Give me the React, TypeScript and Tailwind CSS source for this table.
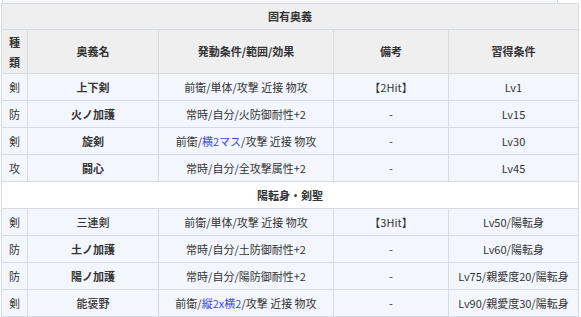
import React from "react"

type Row = {
  kind: string
  name: string
  bold?: boolean
  cond: React.ReactNode
  note: string
  learn: string
}

const blue = (t: string) => <span className="text-[#3a46d6]">{t}</span>

const section1: Row[] = [
  { kind: "剣", name: "上下剣", bold: true, cond: "前衛/単体/攻撃 近接 物攻", note: "【2Hit】", learn: "Lv1" },
  { kind: "防", name: "火ノ加護", bold: true, cond: "常時/自分/火防御耐性+2", note: "-", learn: "Lv15" },
  { kind: "剣", name: "旋剣", bold: true, cond: <>前衛/{blue("横2マス")}/攻撃 近接 物攻</>, note: "-", learn: "Lv30" },
  { kind: "攻", name: "闘心", bold: true, cond: "常時/自分/全攻撃属性+2", note: "-", learn: "Lv45" },
]

const section2: Row[] = [
  { kind: "剣", name: "三連剣", cond: "前衛/単体/攻撃 近接 物攻", note: "【3Hit】", learn: "Lv50/陽転身" },
  { kind: "防", name: "土ノ加護", bold: true, cond: "常時/自分/土防御耐性+2", note: "-", learn: "Lv60/陽転身" },
  { kind: "防", name: "陽ノ加護", bold: true, cond: "常時/自分/陽防御耐性+2", note: "-", learn: "Lv75/親愛度20/陽転身" },
  { kind: "剣", name: "能褒野", cond: <>前衛/{blue("縦2x横2")}/攻撃 近接 物攻</>, note: "-", learn: "Lv90/親愛度30/陽転身" },
]

const cell = "border border-[#d5dbe3] text-center align-middle px-1"

function DataRow({ r }: { r: Row }) {
  return (
    <tr className="h-[27px] bg-[#f3f7fd]">
      <td className={cell}>{r.kind}</td>
      <td className={`${cell} ${r.bold ? "font-bold" : "font-medium"}`}>{r.name}</td>
      <td className={cell}>{r.cond}</td>
      <td className={cell}>{r.note}</td>
      <td className={cell}>{r.learn}</td>
    </tr>
  )
}

export default function App() {
  return (
    <div
      className="w-[581px] h-[317px] bg-white overflow-hidden text-[11px] text-[#333] leading-none"
      style={{ fontFamily: '"Noto Sans CJK JP", "Noto Sans", sans-serif' }}
    >
      {/* tail of the previous table */}
      <div className="h-[3px] ml-[1px] w-[577px] flex">
        <div className="w-[2px] border-r border-[#d5dbe3]" />
        <div className="flex-1 bg-[#f6f6f6]" />
        <div className="w-[21px] border-l border-[#d5dbe3]" />
      </div>
      <table className="ml-[1px] w-[577px] table-fixed border-collapse">
        <colgroup>
          <col className="w-[26px]" />
          <col className="w-[131px]" />
          <col className="w-[175px]" />
          <col className="w-[115px]" />
          <col className="w-[130px]" />
        </colgroup>
        <tbody>
          <tr className="h-[26px] bg-[#efefef]">
            <th colSpan={5} className={`${cell} font-bold`}>固有奥義</th>
          </tr>
          <tr className="h-[44px] bg-[#efefef] font-bold">
            <th className={`${cell} px-0 leading-[20px]`}>種<br />類</th>
            <th className={cell}>奥義名</th>
            <th className={cell}>発動条件/範囲/効果</th>
            <th className={cell}>備考</th>
            <th className={cell}>習得条件</th>
          </tr>
          {section1.map((r, i) => <DataRow key={i} r={r} />)}
          <tr className="h-[27px] bg-white">
            <th colSpan={5} className={`${cell} font-bold`}>陽転身・剣聖</th>
          </tr>
          {section2.map((r, i) => <DataRow key={i} r={r} />)}
        </tbody>
      </table>
    </div>
  )
}
